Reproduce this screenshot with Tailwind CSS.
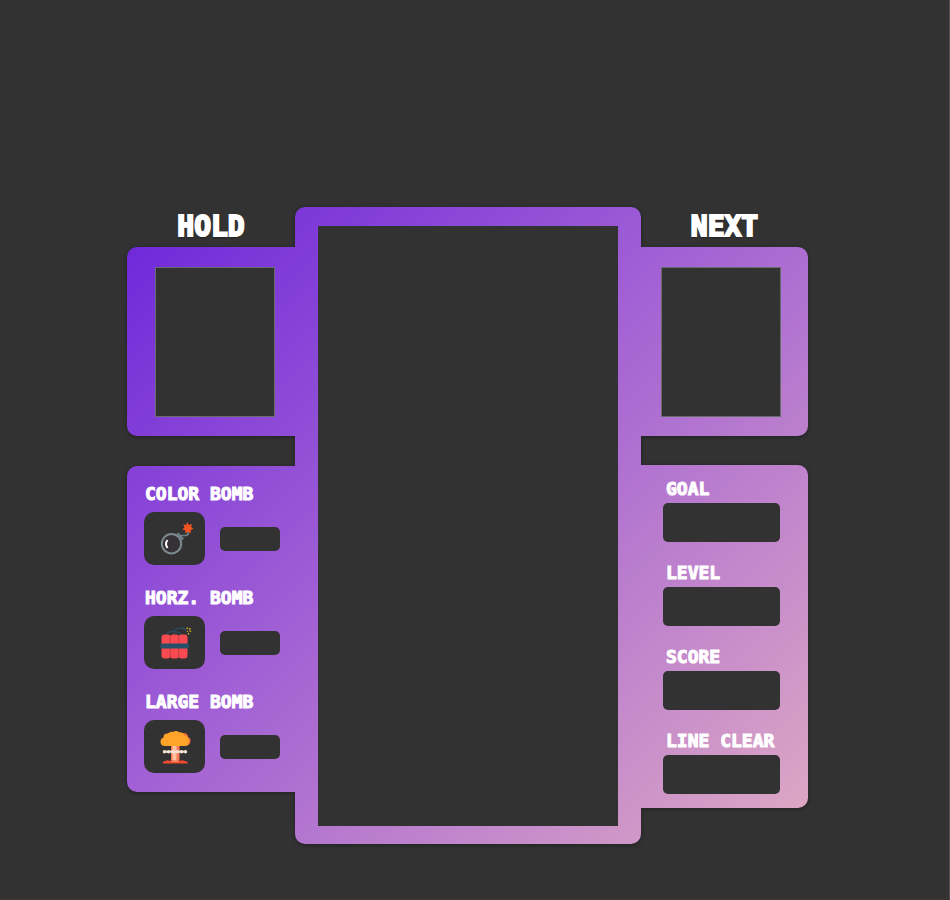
<!DOCTYPE html>
<html lang="en">
<head>
<meta charset="utf-8">
<meta name="viewport" content="width=device-width, initial-scale=1">
<title>Block Game</title>
<script src="https://cdn.jsdelivr.net/npm/@tailwindcss/browser@4"></script>
</head>
<body class="bg-[#323232] font-['DejaVu_Sans_Mono','Liberation_Mono',monospace] font-bold text-white">
<main class="flex min-h-screen items-start justify-center border-r border-b-2 border-r-[#505050] border-b-[#3a3536] pt-[207px] pr-[14px]">
  <div class="relative isolate grid w-full max-w-[681px] grid-cols-[168fr_346fr_167fr]">

    <!-- Shared gradient frame behind all panels -->
    <svg class="absolute inset-0 -z-10 h-full w-full overflow-visible drop-shadow-[0_1px_2px_rgba(0,0,0,0.35)]" viewBox="0 0 681 637" preserveAspectRatio="none" aria-hidden="true">
      <defs>
        <linearGradient id="frame" gradientUnits="userSpaceOnUse" x1="0" y1="40" x2="621" y2="661">
          <stop offset="0" stop-color="#7029da"/>
          <stop offset="0.43" stop-color="#a05fd5"/>
          <stop offset="1" stop-color="#dca6c4"/>
        </linearGradient>
      </defs>
      <path fill="url(#frame)" d="M168 10a10 10 0 0 1 10-10H504a10 10 0 0 1 10 10V40H671a10 10 0 0 1 10 10V219a10 10 0 0 1-10 10H514V258H671a10 10 0 0 1 10 10V591a10 10 0 0 1-10 10H514V627a10 10 0 0 1-10 10H178a10 10 0 0 1-10-10V585H10a10 10 0 0 1-10-10V269a10 10 0 0 1 10-10H168V229H10a10 10 0 0 1-10-10V50a10 10 0 0 1 10-10H168Z"/>
    </svg>

    <!-- Hold and bombs -->
    <div>
      <section>
        <h2 class="text-center text-[28px] leading-10 [-webkit-text-stroke:2px_white] [text-shadow:0_1px_2px_#000]">HOLD</h2>
        <div class="pt-5 pr-5 pb-[19px] pl-7">
          <div class="h-[150px] border border-[#6b6b6b] bg-[#323232]"></div>
        </div>
      </section>
      <section class="mt-[30px] flex flex-col gap-[21px] pt-4 pr-[15px] pb-[19px] pl-[17px]">
        <div>
          <label for="color-count" class="block pl-px text-[18px] leading-6 whitespace-nowrap [-webkit-text-stroke:1px_white]">COLOR BOMB</label>
          <div class="mt-[6px] flex items-center justify-between">
            <button type="button" aria-label="Color bomb" class="flex h-[53px] w-[61px] items-center justify-center rounded-[10px] bg-[#323232]">
              <svg class="size-8 overflow-visible" viewBox="0 0 32 32" fill="none" aria-hidden="true">
                <path d="M20 13.500 22.500 12.500H26.500Q29.500 12.500 29.500 9V5" stroke="#6f7f84" stroke-width="1.700"/>
                <circle cx="12.500" cy="20.700" r="9.700" fill="#353135" stroke="#7b8b90" stroke-width="2"/>
                <path d="m17.500 11 2-1.500 5.500 6-2 2z" fill="#6f8085"/>
                <path d="M8.500 17q-3 4 0 8" stroke="#fff" stroke-width="2"/>
                <path d="m28.500-1 1.400 2.900 3.100-.900-.900 3.100 2.400 1.700-2.800 1.200.200 3.100-2.900-1.400-2.600 1.800-.100-3.200-2.900-.900 2.200-2.200-1.400-2.800 3.100.400z" fill="#f15320"/>
              </svg>
            </button>
            <output id="color-count" class="block h-6 w-[60px] rounded-[5px] bg-[#323232]"></output>
          </div>
        </div>
        <div>
          <label for="horz-count" class="block pl-px text-[18px] leading-6 whitespace-nowrap [-webkit-text-stroke:1px_white]">HORZ. BOMB</label>
          <div class="mt-[6px] flex items-center justify-between">
            <button type="button" aria-label="Horizontal bomb" class="flex h-[53px] w-[61px] items-center justify-center rounded-[10px] bg-[#323232]">
              <svg class="size-8 overflow-visible" viewBox="0 0 32 32" fill="none" aria-hidden="true">
                <path d="M7 8q2-4 8-3.500 6 .5 7 3.500M15 7q0-6 7-6 4 0 5 3" stroke="#2a4c60" stroke-width="1.300"/>
                <g fill="#fb4b50"><rect x="2.500" y="7.500" width="9" height="24" rx="3"/><rect x="11" y="7.500" width="9" height="24" rx="3"/><rect x="19.500" y="7.500" width="9" height="24" rx="3"/></g>
                <path d="M11.200 10v20m8.500-20v20" stroke="#b13740" stroke-width=".8"/>
                <rect x="1.500" y="16.500" width="28.500" height="5" rx="1" fill="#255169"/>
                <path d="M28.200.500v1.600m2 .400 1.300-1.200M30.500 4.200h1.600M29 6l1 1.500m-2-3.500.8.500" stroke="#e9bd31" stroke-width="1.300"/>
              </svg>
            </button>
            <output id="horz-count" class="block h-6 w-[60px] rounded-[5px] bg-[#323232]"></output>
          </div>
        </div>
        <div>
          <label for="large-count" class="block pl-px text-[18px] leading-6 whitespace-nowrap [-webkit-text-stroke:1px_white]">LARGE BOMB</label>
          <div class="mt-[6px] flex items-center justify-between">
            <button type="button" aria-label="Large bomb" class="flex h-[53px] w-[61px] items-center justify-center rounded-[10px] bg-[#323232]">
              <svg class="size-8 overflow-visible" viewBox="0 0 32 32" fill="none" aria-hidden="true">
                <path d="M12 14h8.500v16H12z" fill="#ff7a55"/>
                <path d="M13.500 14h4v16h-4z" fill="#ffc0a4"/>
                <path d="M24 2q5 0 5 4 3 1 2.500 4.500-.5 4-4.500 4h-5z" fill="#f9663b"/>
                <path d="M6 15q-4.500 0-4.500-4.500 0-3 3-4 0-4.500 4.500-4 2-2.500 5-1.500 3-2 6 .300 4-.800 5.500 2.700 3.500.5 3.500 3.500 2 1 1 4-1 3.500-4 3.500z" fill="#ffa329"/>
                <g fill="#f6e3d3"><rect x="4.500" y="19.700" width="23" height="2"/><circle cx="5.500" cy="20.700" r="1.700"/><circle cx="9.500" cy="20.700" r="1.700"/><circle cx="13.500" cy="20.700" r="1.700"/><circle cx="18.500" cy="20.700" r="1.700"/><circle cx="22.500" cy="20.700" r="1.700"/><circle cx="26.500" cy="20.700" r="1.700"/></g>
                <path d="M3.500 32.500q.5-3 3-2.500 2-1.500 4 0l3-1h5l3 1q2-1.500 4 0 3-.500 3.500 2.500z" fill="#f34b2d"/>
                <path d="m12 30 4-1 4 1-1 1h-6z" fill="#ff9770"/>
              </svg>
            </button>
            <output id="large-count" class="block h-6 w-[60px] rounded-[5px] bg-[#323232]"></output>
          </div>
        </div>
      </section>
    </div>

    <!-- Playing field -->
    <div class="px-[23px] pt-[19px] pb-[18px]">
      <div class="h-[600px] bg-[#323232]"></div>
    </div>

    <!-- Next piece and statistics -->
    <div>
      <section>
        <h2 class="text-center text-[28px] leading-10 [-webkit-text-stroke:2px_white] [text-shadow:0_1px_2px_#000]">NEXT</h2>
        <div class="pt-5 pr-[27px] pb-[19px] pl-5">
          <div class="h-[150px] border border-[#6b6b6b] bg-[#323232]"></div>
        </div>
      </section>
      <section class="mt-[29px] flex flex-col gap-[19px] pt-3 pr-7 pb-[14px] pl-[22px]">
        <div>
          <label for="goal" class="block pl-[3px] text-[18px] leading-6 whitespace-nowrap [-webkit-text-stroke:1px_white]">GOAL</label>
          <output id="goal" class="mt-[2px] block h-[39px] rounded-[5px] bg-[#323232]"></output>
        </div>
        <div>
          <label for="level" class="block pl-[3px] text-[18px] leading-6 whitespace-nowrap [-webkit-text-stroke:1px_white]">LEVEL</label>
          <output id="level" class="mt-[2px] block h-[39px] rounded-[5px] bg-[#323232]"></output>
        </div>
        <div>
          <label for="score" class="block pl-[3px] text-[18px] leading-6 whitespace-nowrap [-webkit-text-stroke:1px_white]">SCORE</label>
          <output id="score" class="mt-[2px] block h-[39px] rounded-[5px] bg-[#323232]"></output>
        </div>
        <div>
          <label for="lines" class="block pl-[3px] text-[18px] leading-6 whitespace-nowrap [-webkit-text-stroke:1px_white]">LINE CLEAR</label>
          <output id="lines" class="mt-[2px] block h-[39px] rounded-[5px] bg-[#323232]"></output>
        </div>
      </section>
    </div>
  </div>
</main>
</body>
</html>
